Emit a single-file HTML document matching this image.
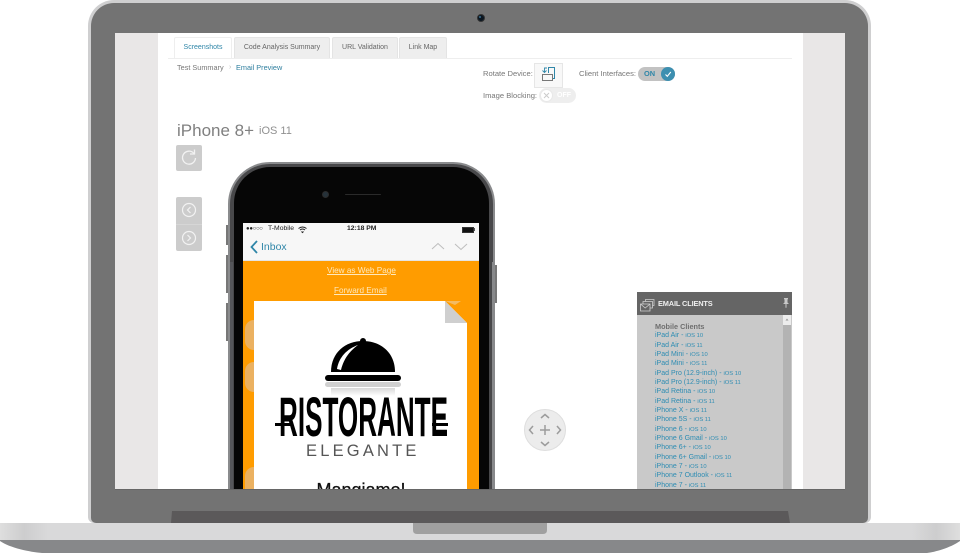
<!DOCTYPE html>
<html><head><meta charset="utf-8">
<style>
html,body{margin:0;padding:0;background:#fff}
#r{position:relative;width:960px;height:554px;overflow:hidden;background:#fff;font-family:"Liberation Sans",sans-serif}
#r div,#r span.a{position:absolute}
.t{white-space:nowrap;line-height:1}
.tab{top:37px;height:21px;background:#eeeeee;border:1px solid #e4e4e4;border-bottom:0;border-radius:2px 2px 0 0;box-sizing:border-box;font-size:7px;line-height:20px;text-align:center;color:#666;white-space:nowrap}
.btn{left:176px;width:26px;background:#cccccc;border-radius:2px}
.c{left:655px;font-size:7px;line-height:9px;color:#2f8db3;white-space:nowrap}
.c small{font-size:5.800px;letter-spacing:0}
svg{position:absolute;overflow:visible}
</style></head><body><div id="r">
<!-- lid -->
<div style="left:88px;top:0;width:783px;height:523px;background:#cfcfd0;border-radius:26px 26px 6px 6px"></div>
<div style="left:91px;top:3px;width:777px;height:520px;background:#737373;border-radius:23px 23px 5px 5px"></div>
<div style="left:477px;top:14px;width:6px;height:6px;border-radius:50%;background:#0b1620;border:1px solid #333;box-sizing:content-box"></div>
<div style="left:479px;top:16px;width:2px;height:2px;border-radius:50%;background:#3a6f8f"></div>
<!-- hinge -->
<svg style="left:0;top:0" width="960" height="554"><path d="M172 511H788L790 523H171Z" fill="#5b595a"/></svg>
<!-- screen -->
<div style="left:115px;top:33px;width:730px;height:456px;background:#fff;overflow:hidden" id="s">
<div style="left:0;top:0;width:43px;height:456px;background:#e9e7e7"></div>
<div style="left:688px;top:0;width:42px;height:456px;background:#e9e7e7"></div>
</div>
<!-- tabs -->
<div style="left:168px;top:58px;width:624px;height:1px;background:#eeeeee"></div>
<div class="tab" style="left:174px;width:58px;background:#fff;color:#2f86a8;border-color:#eeeeee">Screenshots</div>
<div class="tab" style="left:234px;width:96px">Code Analysis Summary</div>
<div class="tab" style="left:332px;width:66px">URL Validation</div>
<div class="tab" style="left:399px;width:48px">Link Map</div>
<div class="t" style="left:177px;top:64px;font-size:7.300px;color:#777">Test Summary</div>
<div class="t" style="left:229px;top:64px;font-size:7px;color:#bbb">›</div>
<div class="t" style="left:236px;top:64px;font-size:7.300px;color:#2f7f9f">Email Preview</div>
<!-- controls -->
<div class="t" style="left:483px;top:70px;font-size:7.600px;color:#777">Rotate Device:</div>
<div style="left:534px;top:63px;width:29px;height:25px;background:#f8f8f8;border:1px solid #e6e6e6;box-sizing:border-box"></div>
<svg style="left:534px;top:63px" width="29" height="25" fill="none" stroke-width="1"><path d="M14.500 10V4.500H20.500V15.500H18.500" stroke="#2f86a8"/><path d="M13 5H10.500V9M8.500 7.500L10.500 9.500L12.500 7.500" stroke="#2f86a8" stroke-width=".9"/><rect x="8.500" y="11.500" width="10" height="6" stroke="#777"/></svg>
<div class="t" style="left:579px;top:70px;font-size:7.600px;color:#777">Client Interfaces:</div>
<div style="left:638px;top:67px;width:37px;height:14px;border-radius:7px;background:#c2c2c2"></div>
<div class="t" style="left:644px;top:70px;font-size:7.400px;font-weight:bold;color:#2f86a8">ON</div>
<div style="left:661px;top:67px;width:14px;height:14px;border-radius:50%;background:#3d8fb0"></div>
<svg style="left:661px;top:67px" width="14" height="14" fill="none"><path d="M4.500 7.500L6.300 9.300L9.800 5" stroke="#fff" stroke-width="1.100"/></svg>
<div class="t" style="left:483px;top:92px;font-size:7.600px;color:#777">Image Blocking:</div>
<div style="left:539px;top:88px;width:37px;height:15px;border-radius:8px;background:#eeeeee"></div>
<div style="left:540px;top:89px;width:13px;height:13px;border-radius:50%;background:#fff;border:1px solid #e8e8e8;box-sizing:border-box"></div>
<svg style="left:540px;top:89px" width="13" height="13" fill="none"><path d="M4 4L9 9M9 4L4 9" stroke="#ccc" stroke-width="1"/></svg>
<div class="t" style="left:557px;top:92px;font-size:7px;font-weight:bold;color:#fff">OFF</div>
<!-- title -->
<div class="t" style="left:177px;top:122px;font-size:17px;color:#808080">iPhone 8+</div>
<div class="t" style="left:259px;top:126px;font-size:11px;color:#909090">iOS 11</div>
<!-- side buttons -->
<div class="btn" style="top:145px;height:26px"></div>
<svg style="left:176px;top:145px" width="26" height="26" fill="none" stroke="#f2f2f2" stroke-width="1.300"><path d="M18 8.500A6.500 6.500 0 1 0 19.500 13"/><path d="M18.500 4.500V9H14"/></svg>
<div class="btn" style="top:197px;height:54px"></div>
<div style="left:176px;top:223.500px;width:26px;height:1px;background:#d6d6d6"></div>
<svg style="left:176px;top:197px" width="26" height="54" fill="none" stroke="#f2f2f2" stroke-width="1.200"><circle cx="13" cy="13" r="6.500"/><path d="M14.500 10L11.500 13L14.500 16"/><circle cx="13" cy="41" r="6.500"/><path d="M11.500 38L14.500 41L11.500 44"/></svg>
<!-- phone -->
<div style="left:226px;top:225px;width:2px;height:20px;background:#777"></div>
<div style="left:226px;top:255px;width:2px;height:38px;background:#777"></div>
<div style="left:226px;top:303px;width:2px;height:38px;background:#777"></div>
<div style="left:495px;top:265px;width:2px;height:38px;background:#777"></div>
<div style="left:228px;top:162px;width:267px;height:327px;overflow:hidden">
 <div style="left:0;top:0;width:267px;height:360px;background:#8a8b8d;border-radius:42px 42px 0 0"></div>
 <div style="left:2px;top:2px;width:263px;height:360px;background:#48484a;border-radius:40px 40px 0 0"></div>
 <div style="left:6px;top:5px;width:255px;height:360px;background:#060606;border-radius:36px 36px 0 0"></div>
 <div style="left:264px;top:100px;width:3px;height:227px;background:#88898b"></div>
 <div style="left:2px;top:100px;width:3px;height:227px;background:#55565a"></div>
</div>
<div style="left:322px;top:191px;width:5px;height:5px;border-radius:50%;background:#26323a;border:1px solid #2c2c2c"></div>
<div style="left:345px;top:194px;width:36px;height:1px;background:#2a2a2a;border-radius:1px"></div>
<!-- iphone screen -->
<div style="left:243px;top:223px;width:236px;height:266px;overflow:hidden;background:#ff9c00">
 <div style="left:0;top:0;width:236px;height:38px;background:#f7f7f7"></div>
 <div style="left:0;top:37px;width:236px;height:1px;background:#e4e4e4"></div>
 <div class="t" style="left:25px;top:3px;font-size:6.800px;color:#222">T-Mobile</div>
 <div class="t" style="left:3px;top:3px;font-size:6px;letter-spacing:-.3px;color:#222">●●○○○</div>
 <svg style="left:55px;top:3px" width="9" height="7" fill="none" stroke="#222" stroke-width="1"><path d="M.5 2.500Q4.500-.5 8.500 2.500M2 4Q4.500 2 7 4M3.500 5.500L4.500 6.500L5.500 5.500"/></svg>
 <div class="t" style="left:104px;top:3px;font-size:6.800px;font-weight:bold;color:#222">12:18 PM</div>
 <div style="left:219px;top:4px;width:10px;height:4px;background:#111;border:1px solid #333"></div>
 <div style="left:231px;top:5px;width:1px;height:3px;background:#555"></div>
 <svg style="left:6px;top:16px" width="12" height="16" fill="none" stroke="#2f86a8" stroke-width="1.800"><path d="M8 2L2.500 8L8 14"/></svg>
 <div class="t" style="left:18px;top:18.500px;font-size:10.500px;color:#2f86a8">Inbox</div>
 <svg style="left:189px;top:18px" width="36" height="12" fill="none" stroke="#bdbdbd" stroke-width="1"><path d="M0 8L6 2.500L12 8M23 3L29 8.500L35 3"/></svg>
 <div class="t" style="left:84px;top:44px;font-size:8.200px;color:#ffe9bd;text-decoration:underline">View as Web Page</div>
 <div class="t" style="left:91px;top:64px;font-size:8.200px;color:#ffe9bd;text-decoration:underline">Forward Email</div>
 <div style="left:2px;top:97px;width:9px;height:30px;background:#ebb161;border-radius:15px 0 0 15px"></div>
 <div style="left:2px;top:139px;width:9px;height:30px;background:#ebb161;border-radius:15px 0 0 15px"></div>
 <div style="left:2px;top:244px;width:9px;height:30px;background:#ebb161;border-radius:15px 0 0 15px"></div>
 <div style="left:11px;top:78px;width:213px;height:190px;background:#fff"></div>
 <svg style="left:202px;top:78px" width="32" height="26"><path d="M0 0H22V22Z" fill="#ff9c00"/><path d="M0 0H16L10 4Z" fill="#f4bb62"/><path d="M0 0V22H22Z" fill="#cfcfcf"/></svg>
 <div class="t" style="left:0;top:258px;width:236px;text-align:center;font-size:18px;color:#111;-webkit-text-stroke:.3px #111">Mangiamo!</div>
</div>
<!-- logo -->
<svg style="left:0;top:0" width="960" height="489">
 <defs><linearGradient id="g" x1="0" y1="0" x2="0" y2="1"><stop offset="0" stop-color="#d8d8d8"/><stop offset="1" stop-color="#fff"/></linearGradient></defs>
 <circle cx="363" cy="341" r="3" fill="#000"/>
 <path d="M331 372C331 352 346 341 363 341C380 341 395 352 395 372Z" fill="#000"/>
 <path d="M337 369C339 357 347 349 358 345C350 351 344 358 341 370Z" fill="#fff"/>
 <rect x="325" y="375" width="76" height="6" rx="3" fill="#000"/>
 <rect x="325" y="382" width="76" height="5" rx="2.500" fill="#d0d0d0"/>
 <rect x="331" y="388" width="64" height="8" fill="url(#g)"/>
 <text x="279" y="436" font-family="Liberation Sans Narrow,Liberation Sans,sans-serif" font-weight="bold" font-size="56" textLength="169" lengthAdjust="spacingAndGlyphs" fill="#000">RISTORANTE</text>
 <rect x="275" y="423" width="16" height="3" fill="#000"/>
 <rect x="432" y="423" width="16" height="3" fill="#000"/>
 <text x="306" y="456" font-family="Liberation Sans,sans-serif" font-size="16.500" letter-spacing="3.200" fill="#555">ELEGANTE</text>
</svg>
<!-- joystick -->
<div style="left:524px;top:409px;width:42px;height:42px;border-radius:50%;background:#ececec;border:1px solid #dedede;box-sizing:border-box"></div>
<svg style="left:524px;top:409px" width="42" height="42" fill="none" stroke="#9c9c9c" stroke-width="1.500"><path d="M17 9L21 5.500L25 9M17 33L21 36.500L25 33M9 17L5.500 21L9 25M33 17L36.500 21L33 25M21 16V26M16 21H26"/></svg>
<!-- email clients -->
<div style="left:637px;top:292px;width:155px;height:197px;background:#c9c9c9;overflow:hidden">
 <div style="left:0;top:0;width:155px;height:23px;background:#656565"></div>
 <svg style="left:3px;top:7px" width="15" height="13" fill="none" stroke="#cfcfcf" stroke-width=".8"><path d="M.5 5H10V12H.5ZM.5 5L5.200 9L10 5M3 5V2.500H12.500V9H10M5.500 2.500V.5H14V6.500H12.500"/></svg>
 <div class="t" style="left:21px;top:8px;font-size:7.400px;font-weight:bold;color:#eee;letter-spacing:-.15px">EMAIL CLIENTS</div>
 <svg style="left:146px;top:6px" width="6" height="10" fill="#c8c8c8"><path d="M1 0H5V1L4.500 1.500V4.500L6 6H3.500V9.500L3 10L2.500 9.500V6H0L1.500 4.500V1.500L1 1Z"/></svg>
 <div style="left:146px;top:23px;width:8px;height:174px;background:#b3b3b3"></div>
 <div style="left:146px;top:23px;width:8px;height:10px;background:#ececec"></div>
 <svg style="left:146px;top:23px" width="8" height="10"><path d="M2.500 5.500L4 3.500L5.500 5.500Z" fill="#999"/></svg>
</div>
<div class="t" style="left:655px;top:322.500px;font-size:7.300px;font-weight:bold;color:#6f6f6f">Mobile Clients</div>
<div class="c" style="top:331px">iPad Air - <small>iOS 10</small></div>
<div class="c" style="top:340.500px">iPad Air - <small>iOS 11</small></div>
<div class="c" style="top:349.800px">iPad Mini - <small>iOS 10</small></div>
<div class="c" style="top:359px">iPad Mini - <small>iOS 11</small></div>
<div class="c" style="top:368.500px">iPad Pro (12.9-inch) - <small>iOS 10</small></div>
<div class="c" style="top:377.800px">iPad Pro (12.9-inch) - <small>iOS 11</small></div>
<div class="c" style="top:387px">iPad Retina - <small>iOS 10</small></div>
<div class="c" style="top:396.500px">iPad Retina - <small>iOS 11</small></div>
<div class="c" style="top:405.800px">iPhone X - <small>iOS 11</small></div>
<div class="c" style="top:415px">iPhone 5S - <small>iOS 11</small></div>
<div class="c" style="top:424.500px">iPhone 6 - <small>iOS 10</small></div>
<div class="c" style="top:433.800px">iPhone 6 Gmail - <small>iOS 10</small></div>
<div class="c" style="top:443px">iPhone 6+ - <small>iOS 10</small></div>
<div class="c" style="top:452.500px">iPhone 6+ Gmail - <small>iOS 10</small></div>
<div class="c" style="top:461.800px">iPhone 7 - <small>iOS 10</small></div>
<div class="c" style="top:471px">iPhone 7 Outlook - <small>iOS 11</small></div>
<div style="left:655px;top:480.500px;height:8.500px;width:100px;overflow:hidden" class="c">iPhone 7 - <small>iOS 11</small></div>
<!-- bezel bottom cover -->
<div style="left:115px;top:489px;width:730px;height:1px;background:#666"></div>
<!-- base -->
<svg style="left:0;top:523px" width="960" height="31">
 <defs><linearGradient id="b" x1="0" y1="0" x2="1" y2="0"><stop offset="0" stop-color="#dedede"/><stop offset=".025" stop-color="#cdcdce"/><stop offset=".05" stop-color="#d9d9da"/><stop offset=".95" stop-color="#d9d9da"/><stop offset=".975" stop-color="#cdcdce"/><stop offset="1" stop-color="#dedede"/></linearGradient></defs>
 <rect x="0" y="0" width="960" height="17" fill="url(#b)"/>
 <path d="M0 17H960V18C950 25 935 29 927 30H42C30 29 10 25 0 18Z" fill="#87888a"/>
 <path d="M413 0H547V7Q547 11 543 11H417Q413 11 413 7Z" fill="#a0a0a0"/>
</svg>
</div></body></html>
